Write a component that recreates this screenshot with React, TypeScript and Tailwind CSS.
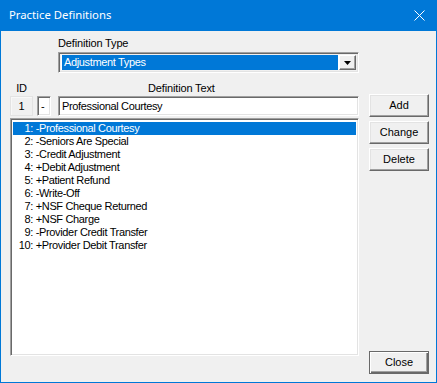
import React from 'react';

const items = [
  { id: 1, text: '-Professional Courtesy' },
  { id: 2, text: '-Seniors Are Special' },
  { id: 3, text: '-Credit Adjustment' },
  { id: 4, text: '+Debit Adjustment' },
  { id: 5, text: '+Patient Refund' },
  { id: 6, text: '-Write-Off' },
  { id: 7, text: '+NSF Cheque Returned' },
  { id: 8, text: '+NSF Charge' },
  { id: 9, text: '-Provider Credit Transfer' },
  { id: 10, text: '+Provider Debit Transfer' },
];

const sunken =
  'border border-t-[#a0a0a0] border-l-[#a0a0a0] border-r-white border-b-white shadow-[inset_1px_1px_0_#696969,inset_-1px_-1px_0_#e3e3e3]';

const Button: React.FC<{ label: string; isDefault?: boolean }> = ({ label, isDefault }) => (
  <button
    className={
      'h-[23px] w-[60px] bg-[#f0f0f0] text-[11px] leading-none text-black ' +
      (isDefault
        ? 'border border-[#696969] shadow-[inset_1px_1px_0_#fff,inset_-1px_-1px_0_#696969,inset_-2px_-2px_0_#a0a0a0]'
        : 'border border-t-white border-l-white border-r-[#696969] border-b-[#696969] shadow-[inset_-1px_-1px_0_#a0a0a0,inset_1px_1px_0_#e3e3e3]')
    }
  >
    {label}
  </button>
);

export default function App() {
  return (
    <div
      className="flex h-[383px] w-[437px] flex-col border-x border-b border-[#0078d7] bg-[#f0f0f0]"
      style={{ fontFamily: '"Liberation Sans", Arial, sans-serif' }}
    >
      <div className="flex h-[31px] shrink-0 items-center justify-between bg-[#0078d7] pl-2 pr-[11px]">
        <span className="text-[11.3px] text-white" style={{ fontFamily: '"Noto Sans", "Open Sans", sans-serif' }}>
          Practice Definitions
        </span>
        <svg width="11" height="11" viewBox="0 0 11 11">
          <path d="M0.5 0.5 L10.5 10.5 M10.5 0.5 L0.5 10.5" stroke="#fff" strokeWidth="1" fill="none" />
        </svg>
      </div>

      <div className="flex flex-1 pl-[9px] pr-[7px] text-[11px] tracking-[-0.35px] text-black">
        <div className="flex w-[349px] flex-col">
          <div className="ml-[48px] mt-[6px] h-[13px] leading-[13px] tracking-[-0.15px]">Definition Type</div>
          <div className={'ml-[48px] mt-[2px] flex h-[21px] w-[301px] p-[2px] ' + sunken}>
            <div className="flex flex-1 items-center bg-white p-px">
              <div className="flex h-[15px] flex-1 items-center bg-[#0078d7] pl-[2px] text-white">Adjustment Types</div>
            </div>
            <div className="flex w-[17px] items-center justify-center border border-t-white border-l-white border-r-[#696969] border-b-[#696969] bg-[#f0f0f0] shadow-[inset_-1px_-1px_0_#a0a0a0]">
              <svg width="7" height="4" viewBox="0 0 7 4">
                <path d="M0 0 H7 L3.5 4 Z" fill="#000" />
              </svg>
            </div>
          </div>

          <div className="mt-[9px] flex h-[13px] leading-[13px] tracking-[-0.15px]">
            <div className="w-[23px] text-center">ID</div>
            <div className="ml-[115px]">Definition Text</div>
          </div>

          <div className="mt-px flex h-[20px] items-stretch">
            <div className="flex w-[23px] items-center justify-center border border-[#e3e3e3] shadow-[inset_1px_1px_0_#f8f8f8]">1</div>
            <div className={'ml-[4px] flex w-[14px] items-center bg-white pl-[3px] ' + sunken}>-</div>
            <div className={'ml-[7px] flex flex-1 items-center bg-white pl-[3px] ' + sunken}>Professional Courtesy</div>
          </div>

          <div className={'mt-[2px] h-[238px] bg-white px-[2px] pt-[3px] ' + sunken}>
            {items.map((it, i) => (
              <div
                key={it.id}
                className={'flex h-[13px] leading-[13px] whitespace-pre ' + (i === 0 ? 'bg-[#0078d7] text-white' : '')}
              >
                <span className="w-[20px] text-right">{it.id}:</span>
                <span> {it.text}</span>
              </div>
            ))}
          </div>
        </div>

        <div className="ml-[10px] flex flex-col pb-[8px] pt-[63px] tracking-normal">
          <div className="flex flex-col gap-[4px]">
            <Button label="Add" />
            <Button label="Change" />
            <Button label="Delete" />
          </div>
          <div className="flex-1" />
          <Button label="Close" isDefault />
        </div>
      </div>
    </div>
  );
}
